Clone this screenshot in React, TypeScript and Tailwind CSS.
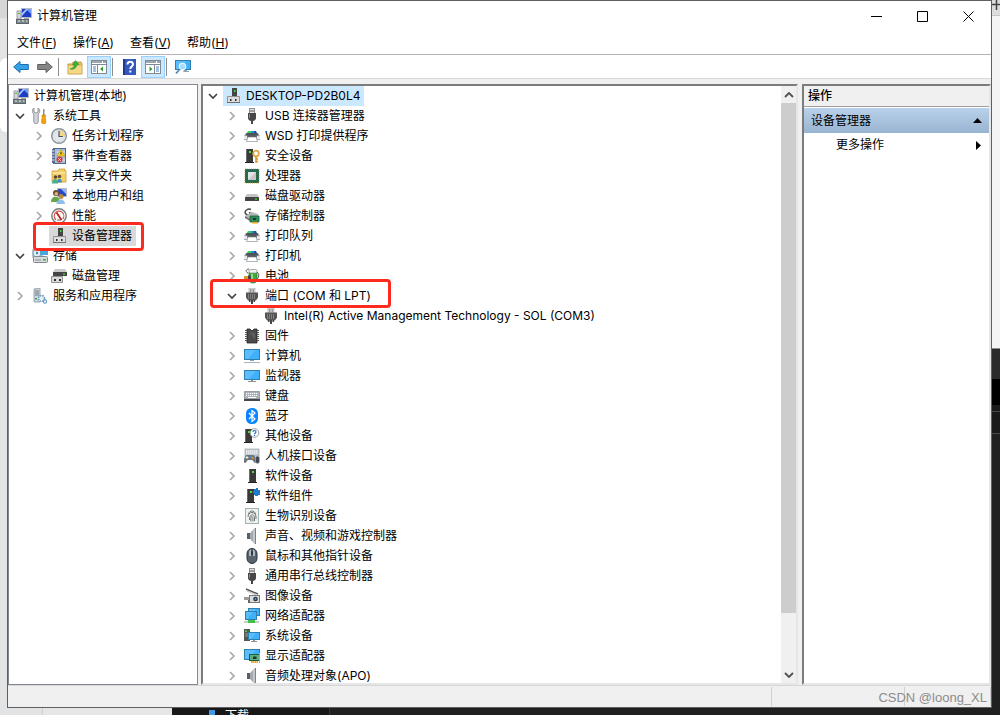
import type { ReactNode } from "react";

function Svg({ children }: { children: ReactNode }) {
  return (
    <svg viewBox="0 0 16 16" className="size-4 shrink-0" aria-hidden="true">
      {children}
    </svg>
  );
}

const screenFill = "#3fb0fb";

function Screen({ x, y, w, h }: { x: number; y: number; w: number; h: number }) {
  return (
    <>
      <rect x={x + 0.5} y={y + 0.5} width={w - 1} height={h - 1} fill={screenFill} stroke="#2f7fae" />
      <path d={`M${x + 1} ${y + 1}h${w - 5}l${-(h - 3)} ${h - 2}h${-(w - 5 - h + 3)}z`} fill="#6cc6ff" opacity=".6" />
    </>
  );
}

function Tower({ x, plug }: { x: number; plug?: boolean }) {
  return (
    <>
      <rect x={x} y="1" width="7" height="13" fill="#3a3a3a" />
      <rect x={x} y="1" width="1" height="13" fill="#6a6a6a" />
      <rect x={x - 1} y="14" width="9" height="1" fill="#222" />
      <rect x={x + 3} y="3" width="2" height="2" fill="#3be53b" />
      {plug && <path d="M10 1h2V0h2v2h2v5h-2v1h-3V7h-1V5h-1V3h1z" fill="#1f7cc8" />}
    </>
  );
}

const icons: Record<string, ReactNode> = {
  management: (
    <>
      <rect x="5.500" y=".5" width="10" height="9" fill="#1b3fc4" stroke="#b9bcc4" />
      <path d="M10 1h5v5z" fill="#6f9cf4" />
      <path d="M6 5l4-4h2l-6 7z" fill="#a9c8ff" />
      <rect x="1" y="3" width="4" height="8" fill="#d5d7da" stroke="#84888f" strokeWidth=".8" />
      <rect x="2" y="5" width="2" height="1" fill="#3cc13c" />
      <rect x="8" y="10" width="5" height="2" fill="#a6a9ae" />
      <rect x=".5" y="11.500" width="12" height="4" fill="#7d878c" stroke="#5d666b" />
      <path d="M2 13h2M6 13h2M10 13h1.500" stroke="#e8ecee" />
    </>
  ),
  tools: (
    <>
      <path d="M2 0v4l2 1 2-1V0c2 1 2.500 4 .2 6V14c0 2-4.400 2-4.400 0V6C-.5 4.500 0 1 2 0z" fill="#d3d6d9" stroke="#7c8186" strokeWidth=".8" />
      <path d="M11 1h1.500v6H11z" fill="#8a8f94" />
      <path d="M10 7h3.500v2l-.7 1 .9 1v4c0 1-4 1-4 0v-4l.9-1-.6-1z" fill="#f5a30a" stroke="#c87a00" strokeWidth=".6" />
    </>
  ),
  clock: (
    <>
      <circle cx="8" cy="8" r="7.300" fill="#e4e8ea" stroke="#8c949c" strokeWidth="1.400" />
      <path d="M8 8V2a6 6 0 0 1 6 6z" fill="#f5d78a" />
      <circle cx="8" cy="8" r="5.500" fill="none" stroke="#b8c8d6" strokeDasharray="1 1.880" />
      <path d="M8 3v5.500h4" fill="none" stroke="#4a5560" strokeWidth="1.200" />
    </>
  ),
  events: (
    <>
      <rect x="2.500" y=".5" width="12" height="15" fill="#a8bfdc" stroke="#51698c" />
      <rect x="1" y="1" width="3" height="14" fill="#5b6f90" />
      <path d="M.5 3h3M.5 6h3M.5 9h3M.5 12h3" stroke="#dfe6ef" />
      <path d="M6 4h8M6 7h8M6 12h8" stroke="#e9f0f8" />
      <path d="M10 1.500L14 8H6z" fill="#ffd21e" stroke="#b88c00" strokeWidth=".6" />
      <path d="M10 4v2.500" stroke="#222" />
      <circle cx="8.500" cy="11.500" r="3" fill="#d9363a" />
      <path d="M7.300 10.300l2.400 2.400m0-2.400l-2.400 2.400" stroke="#fff" strokeWidth=".9" />
    </>
  ),
  shared: (
    <>
      <path d="M1 3h6l1-2h6v2h1v11H1z" fill="#f3cf6b" stroke="#cb9e33" strokeWidth=".8" />
      <path d="M1.500 5h13" stroke="#fff0b8" />
      <circle cx="4.500" cy="9" r="1.800" fill="#5a4632" />
      <circle cx="8.500" cy="8.500" r="1.800" fill="#6b5137" />
      <path d="M1 15.500c0-6 6-6 6 0z" fill="#49b08a" />
      <path d="M6 14.500c0-5 5-5 5 0z" fill="#4a8fc4" />
    </>
  ),
  users: (
    <>
      <rect x="6.500" y=".5" width="9" height="8" fill="#2547c8" stroke="#b9bcc4" />
      <path d="M10 1h5v5z" fill="#8fb6ff" />
      <circle cx="5" cy="5" r="3" fill="#6c4e2e" />
      <circle cx="5.300" cy="5.800" r="1.800" fill="#dfb080" />
      <path d="M0 14c0-7 9-7 9 0z" fill="#6aa34d" />
      <circle cx="10" cy="8.500" r="2.500" fill="#b98c3c" />
      <path d="M5.500 16c0-6 8.500-6 8.500 0z" fill="#8fbdec" />
    </>
  ),
  perf: (
    <>
      <circle cx="8" cy="8" r="7.200" fill="#fff" stroke="#777d82" strokeWidth="1.400" />
      <circle cx="8" cy="8" r="4.800" fill="none" stroke="#d8574e" strokeWidth="1.200" strokeDasharray="22 9" transform="rotate(130 8 8)" />
      <path d="M5.500 4.500L10.500 12" stroke="#c21d1d" strokeWidth="1.800" />
      <path d="M6 12h4" stroke="#666" />
    </>
  ),
  device: (
    <>
      <rect x="7" y="0" width="5" height="9" fill="#454545" />
      <rect x="9" y="2" width="1.500" height="2" fill="#36e236" />
      <path d="M2.500 8.500h12v6h-12z" fill="#dedede" stroke="#929292" />
      <rect x="2" y="14" width="13" height="1" fill="#707070" />
      <path d="M5 11h1.500v2H5zM10 11h1.500v2H10z" fill="#2d2d2d" />
    </>
  ),
  storage: (
    <>
      <rect x="0" y="1" width="11" height="9" rx="1" fill="#b8c2c8" />
      <circle cx="5" cy="5" r="4" fill="#dff0fa" stroke="#6fa7c7" />
      <circle cx="5" cy="5" r="1.200" fill="#4a7f9f" />
      <path d="M8 1h8v6H8z" fill="#4ba5de" />
      <rect x="1.500" y="8.500" width="14" height="6" rx="1" fill="#d8dcde" stroke="#83898c" />
      <rect x="11" y="11" width="3" height="1.500" fill="#27b927" />
      <path d="M3 12h6" stroke="#858d91" />
    </>
  ),
  diskmgmt: (
    <>
      <path d="M4 1h10l2 3H2z" fill="#c9c9c9" />
      <rect x="2" y="4" width="14" height="4" fill="#454545" />
      <rect x="12" y="5.500" width="2" height="1.200" fill="#36e236" />
      <path d="M.5 8.500h11v6H.5z" fill="#dadada" stroke="#929292" />
      <path d="M3 11h2v2H3zM8 11h2v2H8z" fill="#2d2d2d" />
    </>
  ),
  services: (
    <>
      <path d="M2 1l6-1v14H2z" fill="#cfd6dc" stroke="#8a949c" strokeWidth=".8" />
      <path d="M3 3h4M3 5h4M3 7h4" stroke="#6f7b85" />
      <rect x="3" y="10" width="2" height="1.500" fill="#2fae3f" />
      <circle cx="9.500" cy="10.500" r="3" fill="#e8f1f8" stroke="#6f9fc2" strokeWidth="1.600" strokeDasharray="1.600 .8" />
      <circle cx="13" cy="13.500" r="1.600" fill="none" stroke="#6f9fc2" strokeWidth="1.200" />
    </>
  ),
  usb: (
    <>
      <rect x="5.500" y=".5" width="5" height="5" fill="#e4e4e4" stroke="#8e8e8e" />
      <path d="M7 2v2M9 2v2" stroke="#555" />
      <path d="M4 5h8v5c0 2-2 3-3 3v3H7v-3c-1 0-3-1-3-3z" fill="#474747" />
      <path d="M5.500 6v4" stroke="#8b8b8b" />
    </>
  ),
  printer: (
    <>
      <path d="M4 3h8l1 3H3z" fill="#1f8ee0" />
      <path d="M4 3h3v2H3.500z" fill="#37cf6c" />
      <path d="M10 3h2l1 3h-3z" fill="#174f9a" />
      <path d="M2 5h12l2 3v4H0V8z" fill="#a7adb2" />
      <path d="M2.500 5h11l1 2.500h-13z" fill="#4d5359" />
      <path d="M0 8h3v3H0zM13 8h3v3h-3z" fill="#e4e8eb" />
      <path d="M3.500 7.500h9V10h-9z" fill="#34393e" />
      <path d="M4 9h8l1.500 4.500h-11z" fill="#fff" stroke="#9aa2a8" strokeWidth=".8" />
    </>
  ),
  security: (
    <>
      <Tower x={2} />
      <circle cx="12" cy="5.500" r="2.800" fill="none" stroke="#e0a84a" strokeWidth="1.800" />
      <path d="M12 8v7M12 11h2M12 13.500h2" stroke="#d9982b" strokeWidth="1.600" />
    </>
  ),
  cpu: (
    <>
      <rect x="1" y="1" width="14" height="14" fill="#1f5c43" stroke="#c9b25c" strokeDasharray="1 1" />
      <rect x="1.500" y="1.500" width="13" height="13" fill="#246a4e" />
      <rect x="4" y="4" width="8" height="8" fill="#e3e3e3" />
      <path d="M4 12l8-8v8z" fill="#c6c6c6" />
    </>
  ),
  disk: (
    <>
      <path d="M3 6h10l2 3H1z" fill="#c4c4c4" />
      <rect x="1" y="9" width="14" height="4" rx=".5" fill="#444" />
      <rect x="11" y="10.500" width="2" height="1.200" fill="#36e236" />
    </>
  ),
  controller: (
    <>
      <path d="M7 1.500C4 0 0 3 1.500 5.500S6 7 8 6L5 4.500" fill="none" stroke="#4a4a4a" strokeWidth="1.500" />
      <path d="M1 8l7-4 6 2v3l-8 2z" fill="#b4b7ba" />
      <path d="M1 8l5 3v2L1 10z" fill="#6d7073" />
      <path d="M6 8h9v6H6z" fill="#2f8a5b" stroke="#1d5f3e" strokeWidth=".8" />
      <rect x="9" y="10" width="3" height="2" fill="#1b3b2b" />
      <path d="M8 14.700h6" stroke="#f0a818" strokeWidth="1.600" />
    </>
  ),
  battery: (
    <>
      <path d="M4 5C1 4 2 1 5 1" fill="none" stroke="#555" />
      <path d="M5 4h8v8c0 4-8 4-8 0z" fill="#41a83e" stroke="#2d6b2d" strokeWidth=".7" />
      <path d="M7 6h2v8H7z" fill="#93dc7d" />
      <rect x="5" y="1.500" width="8" height="3.500" rx="1.500" fill="#eef1ee" stroke="#858b86" strokeWidth=".7" />
      <path d="M13 4c3 2 2 6-1 8" fill="none" stroke="#555" />
      <path d="M0 8h4v3H0z" fill="#d79a35" />
      <path d="M4 7.500h3v4H4z" fill="#444" />
    </>
  ),
  port: (
    <>
      <rect x="5" y="0" width="6" height="5" fill="#e0e0e0" stroke="#9a9a9a" strokeWidth=".6" />
      <path d="M6.500 1v3M8 1v3M9.500 1v3" stroke="#777" strokeWidth=".7" />
      <path d="M2 4.500h12v5l-2 3H4l-2-3z" fill="#555" />
      <path d="M4.500 6v5M6.500 6v5M8.500 6v5M10.500 6v5" stroke="#8a8a8a" strokeWidth=".8" />
      <path d="M5 12h1.500v2H5zM9.500 12H11v2H9.500zM7 12h2v4H7z" fill="#444" />
    </>
  ),
  firmware: (
    <>
      <path d="M3 1h3l2 2 2-2h3v14H3z" fill="#4a4a4a" stroke="#262626" strokeWidth=".8" />
      <path d="M1 2.500h2M1 4.500h2M1 6.500h2M1 8.500h2M1 10.500h2M1 12.500h2M13 2.500h2M13 4.500h2M13 6.500h2M13 8.500h2M13 10.500h2M13 12.500h2" stroke="#5b5b5b" />
      <path d="M5 4l6 8V5z" fill="#5d5d5d" />
    </>
  ),
  computer: (
    <>
      <Screen x={0} y={1} w={16} h={11} />
      <path d="M6 12h4v1H6z" fill="#8ba0b0" />
      <path d="M0 14.500h16" stroke="#a3b5c4" />
    </>
  ),
  monitor: (
    <>
      <Screen x={0} y={2} w={16} h={10} />
      <path d="M7 12h2v1h3v1H4v-1h3z" fill="#86939d" />
    </>
  ),
  keyboard: (
    <>
      <path d="M.5 3.500h15V11H.5z" fill="#aab0b6" stroke="#878e95" strokeWidth=".8" />
      <path d="M2 5.500h12M2 7.500h12" stroke="#fff" strokeDasharray="1.200 .8" />
      <path d="M4 9.500h8" stroke="#fff" />
      <rect x="0" y="11" width="16" height="2" fill="#44484d" />
    </>
  ),
  bluetooth: (
    <>
      <rect x="2" y="0" width="12" height="16" rx="5.500" fill="#0a84ff" />
      <path d="M5 5l6 6-3 2.500v-11L11 5l-6 6" fill="none" stroke="#fff" strokeWidth="1.200" />
    </>
  ),
  other: (
    <>
      <Tower x={1} />
      <circle cx="10.500" cy="5" r="4.300" fill="#fff" stroke="#9b9b9b" />
      <path d="M9 4c0-2 3-2 3 0 0 1-1.500 1-1.500 2.300M10.500 7v1" fill="none" stroke="#1d6dc4" strokeWidth="1.200" />
    </>
  ),
  hid: (
    <>
      <rect x="1" y="1" width="14" height="7" fill="#c9ced3" stroke="#8a9198" strokeWidth=".6" />
      <path d="M2 3h12M2 5h12" stroke="#fff" strokeDasharray="1.300 .7" />
      <path d="M3 7h6c3 0 4 8 2 8-1 0-2-3-3-3H4c-1 0-1.500 3-3 3-2 0-1-8 2-8z" fill="#6b747c" />
      <path d="M3 8v3M1.500 9.500h3" stroke="#fff" strokeWidth=".8" />
      <circle cx="7" cy="8.500" r="1" fill="#2a9df0" />
      <circle cx="8.700" cy="10" r="1" fill="#f29a2b" />
      <rect x="11.500" y="8" width="4" height="7.500" rx="2" fill="#414a54" stroke="#b4bcc4" strokeWidth=".6" />
    </>
  ),
  software: <Tower x={5} />,
  component: <Tower x={3} plug />,
  biometric: (
    <>
      <rect x="1.500" y=".5" width="13" height="15" fill="#eef3f1" stroke="#9fb3ac" />
      <path d="M4.500 6c1-4 6-4 7 0M4 9c0-6 8-6 8 0v2M5.500 12c-.5-6 5-7 5-2v3M7 13.500c0-2-1-4 1-5 1.500 1 .5 3 1 5" fill="none" stroke="#5f6664" strokeWidth=".9" />
    </>
  ),
  sound: (
    <>
      <path d="M3 5h3v6H3z" fill="#56616b" />
      <path d="M6 5l5-5v16l-5-5z" fill="#a4aab0" />
      <path d="M9 2l2-2v16l-2-2z" fill="#c3c8cc" />
      <path d="M11.500 0v16" stroke="#7b8288" />
    </>
  ),
  mouse: (
    <>
      <rect x="3" y=".5" width="10" height="15" rx="5" fill="#59626d" stroke="#2c333b" />
      <path d="M5 4c0-2 2-2.500 2-2.500V8H5zM11 4c0-2-2-2.500-2-2.500V8h2z" fill="#aeb9c6" />
      <rect x="7.200" y="3" width="1.600" height="4" rx=".8" fill="#262c33" />
    </>
  ),
  imaging: (
    <>
      <path d="M2 1l12 5" stroke="#555" strokeWidth="1.400" />
      <path d="M3 3l9 4" stroke="#c0c0c0" />
      <path d="M0 9h6v3H0z" fill="#9a9a9a" />
      <rect x="5.500" y="7.500" width="10" height="7" fill="#dcdcdc" stroke="#777" />
      <circle cx="11.500" cy="11" r="2.300" fill="#234" />
      <circle cx="11.500" cy="11" r="1" fill="#5b9ac2" />
      <path d="M4 12h2v3H4z" fill="#666" />
    </>
  ),
  network: (
    <>
      <Screen x={4} y={0} w={12} h={8} />
      <Screen x={1} y={3} w={12} h={9} />
      <path d="M6 12h3v1h6v2H0v-2h6z" fill="#c9cdcf" />
      <rect x="4" y="12" width="7" height="3" fill="#44bf45" />
    </>
  ),
  system: (
    <>
      <path d="M0 1h6v12H0z" fill="#555" />
      <rect x="1" y="2.500" width="2" height="1.500" fill="#36e236" />
      <path d="M1 6h3M1 8h3" stroke="#999" />
      <Screen x={4} y={4} w={12} h={8} />
      <path d="M9 12h2v1h2v1H7v-1h2z" fill="#86939d" />
    </>
  ),
  display: (
    <>
      <Screen x={0} y={1} w={16} h={11} />
      <rect x="5.500" y="6.500" width="10" height="6" fill="#5fae82" stroke="#1d5f3e" />
      <rect x="9" y="8.500" width="3.500" height="2.500" fill="#183a2a" />
      <path d="M7 14h7" stroke="#f2a516" strokeWidth="2.200" strokeDasharray="1.600 .4" />
      <path d="M15.500 5v10" stroke="#9aa" />
    </>
  ),
  back: (
    <path d="M.7 8L7 2.500V5.500h8.300v5H7v3z" fill="#35a2ea" stroke="#1b6fae" strokeWidth="1" strokeLinejoin="round" />
  ),
  forward: (
    <path d="M15.300 8L9 2.500V5.500H.7v5H9v3z" fill="#868686" stroke="#5e5e5e" strokeWidth="1" strokeLinejoin="round" />
  ),
  upfolder: (
    <>
      <path d="M1 5h4l1-2h8l1 2v10H1z" fill="#e9bf5e" stroke="#b98d2d" strokeWidth=".8" />
      <path d="M1.500 7h13v7.500h-13z" fill="#f6d788" />
      <path d="M3 10c3-1 4-2 4.500-4H5.500L8.500 1.500 12 5.500h-2C9.500 9 7 11 3 10z" fill="#36b53c" stroke="#218426" strokeWidth=".5" />
    </>
  ),
  paneLeft: (
    <>
      <rect x=".5" y="1.500" width="15" height="13" fill="#fff" stroke="#7e8a94" />
      <path d="M1 3h14" stroke="#7e8a94" strokeWidth="1.600" strokeDasharray="10 1" />
      <path d="M1 5.500h14M6.500 6v9" stroke="#7e8a94" />
      <path d="M2 8h3M2 10h3M2 12h3" stroke="#4a86c0" />
      <path d="M12 7.500v5L9 10z" fill="#2e9b34" />
    </>
  ),
  paneRight: (
    <>
      <rect x=".5" y="1.500" width="15" height="13" fill="#fff" stroke="#7e8a94" />
      <path d="M1 3h14" stroke="#7e8a94" strokeWidth="1.600" strokeDasharray="10 1" />
      <path d="M1 5.500h14M9.500 6v9" stroke="#7e8a94" />
      <path d="M11 8h3M11 10h3M11 12h3" stroke="#4a86c0" />
      <path d="M4.500 7.500v5l3-2.500z" fill="#2e9b34" />
    </>
  ),
  help: (
    <>
      <rect x="2" y="0" width="13" height="16" fill="#3558c0" />
      <rect x="2" y="0" width="2" height="16" fill="#1f3a8c" />
      <path d="M6.500 5.500C6.500 2 12 2 12 5.200 12 7.500 9.300 7.500 9.300 10M9.300 11.500v2" fill="none" stroke="#fff" strokeWidth="2" />
    </>
  ),
  scan: (
    <>
      <Screen x={0} y={1} w={16} h={10} />
      <path d="M9 11h3v1h2v1H8z" fill="#8ea4b2" />
      <circle cx="7.500" cy="7.500" r="3.200" fill="#9fdcff" stroke="#e6f4fc" strokeWidth="1.200" />
      <path d="M5 10L1 14.500" stroke="#5c87a6" strokeWidth="1.800" />
    </>
  ),
};

function Icon({ name }: { name: string }) {
  return <Svg>{icons[name]}</Svg>;
}

type Node = {
  label: string;
  icon: string;
  level: 0 | 1 | 2;
  state?: "open" | "closed";
  selected?: boolean;
  marked?: boolean;
};

const navigation: Node[] = [
  { label: "计算机管理(本地)", icon: "management", level: 0 },
  { label: "系统工具", icon: "tools", level: 1, state: "open" },
  { label: "任务计划程序", icon: "clock", level: 2, state: "closed" },
  { label: "事件查看器", icon: "events", level: 2, state: "closed" },
  { label: "共享文件夹", icon: "shared", level: 2, state: "closed" },
  { label: "本地用户和组", icon: "users", level: 2, state: "closed" },
  { label: "性能", icon: "perf", level: 2, state: "closed" },
  { label: "设备管理器", icon: "device", level: 2, selected: true, marked: true },
  { label: "存储", icon: "storage", level: 1, state: "open" },
  { label: "磁盘管理", icon: "diskmgmt", level: 2 },
  { label: "服务和应用程序", icon: "services", level: 1, state: "closed" },
];

const devices: Node[] = [
  { label: "DESKTOP-PD2B0L4", icon: "device", level: 0, state: "open", selected: true },
  { label: "USB 连接器管理器", icon: "usb", level: 1, state: "closed" },
  { label: "WSD 打印提供程序", icon: "printer", level: 1, state: "closed" },
  { label: "安全设备", icon: "security", level: 1, state: "closed" },
  { label: "处理器", icon: "cpu", level: 1, state: "closed" },
  { label: "磁盘驱动器", icon: "disk", level: 1, state: "closed" },
  { label: "存储控制器", icon: "controller", level: 1, state: "closed" },
  { label: "打印队列", icon: "printer", level: 1, state: "closed" },
  { label: "打印机", icon: "printer", level: 1, state: "closed" },
  { label: "电池", icon: "battery", level: 1, state: "closed" },
  { label: "端口 (COM 和 LPT)", icon: "port", level: 1, state: "open", marked: true },
  { label: "Intel(R) Active Management Technology - SOL (COM3)", icon: "port", level: 2 },
  { label: "固件", icon: "firmware", level: 1, state: "closed" },
  { label: "计算机", icon: "computer", level: 1, state: "closed" },
  { label: "监视器", icon: "monitor", level: 1, state: "closed" },
  { label: "键盘", icon: "keyboard", level: 1, state: "closed" },
  { label: "蓝牙", icon: "bluetooth", level: 1, state: "closed" },
  { label: "其他设备", icon: "other", level: 1, state: "closed" },
  { label: "人机接口设备", icon: "hid", level: 1, state: "closed" },
  { label: "软件设备", icon: "software", level: 1, state: "closed" },
  { label: "软件组件", icon: "component", level: 1, state: "closed" },
  { label: "生物识别设备", icon: "biometric", level: 1, state: "closed" },
  { label: "声音、视频和游戏控制器", icon: "sound", level: 1, state: "closed" },
  { label: "鼠标和其他指针设备", icon: "mouse", level: 1, state: "closed" },
  { label: "通用串行总线控制器", icon: "usb", level: 1, state: "closed" },
  { label: "图像设备", icon: "imaging", level: 1, state: "closed" },
  { label: "网络适配器", icon: "network", level: 1, state: "closed" },
  { label: "系统设备", icon: "system", level: 1, state: "closed" },
  { label: "显示适配器", icon: "display", level: 1, state: "closed" },
  { label: "音频处理对象(APO)", icon: "sound", level: 1, state: "closed" },
];

function Toggle({ node }: { node: Node }) {
  if (!node.state) return <span className="w-4 shrink-0" />;
  const open = node.state === "open";
  return (
    <button type="button" aria-label={open ? "折叠" : "展开"} className="w-4 shrink-0">
      <svg viewBox="0 0 16 16" className="size-4" fill="none" aria-hidden="true">
        {open ? (
          <path d="M4 6l4 4 4-4" stroke="#404040" strokeWidth="1.600" />
        ) : (
          <path d="M6 4l4 4-4 4" stroke="#a6a6a6" strokeWidth="1.600" />
        )}
      </svg>
    </button>
  );
}

function Tree({
  nodes,
  label,
  indents,
  selection,
  mark,
}: {
  nodes: Node[];
  label: string;
  indents: [string, string, string];
  selection: string;
  mark: string;
}) {
  return (
    <ul role="tree" aria-label={label} className="min-w-0 flex-1 overflow-hidden">
      {nodes.map((node) => (
        <li
          key={node.label}
          role="treeitem"
          aria-level={node.level + 1}
          aria-expanded={node.state ? node.state === "open" : undefined}
          aria-selected={!!node.selected}
          className={`relative flex h-5 items-center gap-0.5 ${indents[node.level]}`}
        >
          {(node.level > 0 || node.state) && <Toggle node={node} />}
          <span className={`flex h-5 items-center gap-[5px] pr-1 pl-0.5 whitespace-nowrap ${node.selected ? selection : ""}`}>
            <Icon name={node.icon} />
            {node.label}
          </span>
          {node.marked && <span className={`absolute z-10 rounded-sm border-3 border-[#fd2a1e] ${mark}`} />}
        </li>
      ))}
    </ul>
  );
}

const menus = [
  ["文件", "F"],
  ["操作", "A"],
  ["查看", "V"],
  ["帮助", "H"],
];

function ToolButton({ name, label, active }: { name: string; label: string; active?: boolean }) {
  return (
    <button
      type="button"
      aria-label={label}
      className={`flex h-[22px] w-6 items-center justify-center ${active ? "border border-[#99d1ff] bg-[#cce8ff]" : ""}`}
    >
      <Icon name={name} />
    </button>
  );
}

function Separator() {
  return <span className="mr-1 ml-px h-[18px] w-px bg-[#8c8c8c]" />;
}

function CaptionButton({ label, d }: { label: string; d: string }) {
  return (
    <button type="button" aria-label={label} className="flex h-full w-[46px] items-center justify-center">
      <svg viewBox="0 0 11 11" className="size-[11px]" fill="none" stroke="#000" aria-hidden="true">
        <path d={d} />
      </svg>
    </button>
  );
}

function ScrollButton({ label, d }: { label: string; d: string }) {
  return (
    <button type="button" aria-label={label} className="flex h-[17px] shrink-0 items-center justify-center">
      <svg viewBox="0 0 10 10" className="size-2.5" fill="none" stroke="#505050" strokeWidth="1.800" aria-hidden="true">
        <path d={d} />
      </svg>
    </button>
  );
}

const sunken = "border-2 border-t-[#7c7c7c] border-l-[#7c7c7c] border-r-[#e6e6e6] border-b-[#e6e6e6] bg-white";

export default function App() {
  return (
    <div className="flex h-screen flex-col overflow-hidden bg-[#e2e3e5] font-['Inter','Noto_Sans_CJK_SC',sans-serif] text-xs text-black">
      <div className="flex min-h-0 flex-1">
        <div className="flex w-[7px] shrink-0 flex-col">
          <div className="h-[18px] bg-[#d6d6d7]" />
          <div className="h-10" />
          <div className="h-[74px] rounded-l-md bg-white" />
        </div>

        <div className="flex min-w-0 flex-1 flex-col border border-[#5f5f5f] bg-[#f0f0f0]">
          <header className="flex h-[30px] shrink-0 items-center bg-white pl-2">
            <Icon name="management" />
            <h1 className="flex-1 pl-[5px]">计算机管理</h1>
            <div className="flex h-full">
              <CaptionButton label="最小化" d="M0 5.500h11" />
              <CaptionButton label="最大化" d="M.5 .5h10v10h-10z" />
              <CaptionButton label="关闭" d="M.5 .5l10 10M10.500 .5l-10 10" />
            </div>
          </header>

          <nav aria-label="菜单" className="flex h-6 shrink-0 items-center gap-4 border-b border-[#b4b4b4] bg-white pl-[9px]">
            {menus.map(([name, key]) => (
              <button key={key} type="button">
                {name}(<span className="underline">{key}</span>)
              </button>
            ))}
          </nav>

          <div role="toolbar" aria-label="工具栏" className="flex shrink-0 items-center border-b border-[#d9d9d9] bg-white pt-px pl-px">
            <ToolButton name="back" label="后退" />
            <ToolButton name="forward" label="前进" />
            <Separator />
            <ToolButton name="upfolder" label="上移" />
            <ToolButton name="paneLeft" label="显示/隐藏控制台树" active />
            <Separator />
            <ToolButton name="help" label="帮助" />
            <ToolButton name="paneRight" label="显示/隐藏操作窗格" active />
            <Separator />
            <ToolButton name="scan" label="扫描检测硬件改动" />
          </div>

          <main className="flex min-h-0 flex-1 gap-[3px] pt-[5px]">
            <section className="flex w-[190px] shrink-0 border border-[#828790] bg-white pt-px">
              <Tree
                nodes={navigation}
                label="控制台树"
                indents={["pl-0.5", "pl-[3px]", "pl-[22px]"]}
                selection="bg-[#d9d9d9]"
                mark="-top-1 left-6 h-[29px] w-[111px]"
              />
            </section>

            <section className={`mr-px flex min-w-0 flex-1 ${sunken}`}>
              <Tree
                nodes={devices}
                label="设备"
                indents={["pl-0.5", "pl-[21px]", "pl-10"]}
                selection="bg-[#cce8ff]"
                mark="-top-[7px] left-[7px] h-[29px] w-[181px]"
              />
              <div className="flex w-[15px] shrink-0 flex-col bg-[#f0f0f0]">
                <ScrollButton label="向上滚动" d="M1 7l4-4 4 4" />
                <div className="flex-[51] bg-[#cdcdcd]" />
                <div className="flex-[5.3]" />
                <ScrollButton label="向下滚动" d="M1 3l4 4 4-4" />
              </div>
            </section>

            <aside className={`w-[189px] shrink-0 ${sunken}`}>
              <h2 className="flex h-[21px] items-center border-b border-[#a0a0a0] bg-[#f0f0f0] pl-1 font-medium">操作</h2>
              <button
                type="button"
                className="mt-px flex h-[25px] w-full items-center justify-between bg-linear-to-b from-[#b9d1ea] to-[#99b4d1] pr-[7px] pl-[7px]"
              >
                设备管理器
                <svg viewBox="0 0 9 5" className="h-[5px] w-[9px]" aria-hidden="true">
                  <path d="M0 5L4.500 0 9 5z" />
                </svg>
              </button>
              <button type="button" className="flex h-6 w-full items-center justify-between pr-2 pl-8">
                更多操作
                <svg viewBox="0 0 5 9" className="h-[9px] w-[5px]" aria-hidden="true">
                  <path d="M0 0l5 4.500L0 9z" />
                </svg>
              </button>
            </aside>
          </main>

          <footer className="flex h-[22px] shrink-0 border-t border-[#d7d7d7] py-px">
            <div className="flex-1 border-r border-[#d0d0d0]" />
            <div className="relative flex w-[219px]">
              <div className="w-[133px] border-r border-[#d0d0d0]" />
              <div className="flex-1 border-r border-[#d0d0d0]" />
              <span className="absolute right-1 bottom-0 font-['Liberation_Sans',sans-serif] text-[13px] leading-4 text-[#8c8c8c]">
                CSDN @loong_XL
              </span>
            </div>
          </footer>
        </div>

        <div className="flex w-2 shrink-0 flex-col overflow-hidden bg-[#202020]">
          <div className="h-4 border-b border-[#c4c4c4] bg-[#dcdcdc]">
            <svg viewBox="0 0 8 12" className="h-3 w-2" fill="none" stroke="#444" strokeWidth="1.500" aria-hidden="true">
              <path d="M0 4.500h8M4.500 0v10" />
            </svg>
          </div>
          <div className="h-[333px] border-b border-[#8c8c8c] bg-[#f4f4f4]" />
          <div className="h-[30px] bg-[#2b2b2b]" />
          <div className="h-[26px] bg-black" />
          <div className="h-[7px] border-b border-[#4a4a4a] bg-[#1a1a1a]" />
          <div className="h-[22px] border-b border-[#4a4a4a] bg-[#1a1a1a]" />
        </div>
      </div>

      <div className="flex h-[7px] shrink-0 overflow-hidden bg-[#202020] text-white">
        <div className="w-[43px] border-r border-[#cfcfcf] bg-[#e2e3e5]" />
        <div className="w-[129px] bg-[#e6e6e6]" />
        <div className="flex w-[158px] gap-2.5 border-r border-[#333] bg-[#181818] pl-[37px]">
          <span className="mt-0.5 h-3 w-1.5 bg-[#3d9be9]" />
          <span className="leading-4">下载</span>
        </div>
      </div>
    </div>
  );
}
